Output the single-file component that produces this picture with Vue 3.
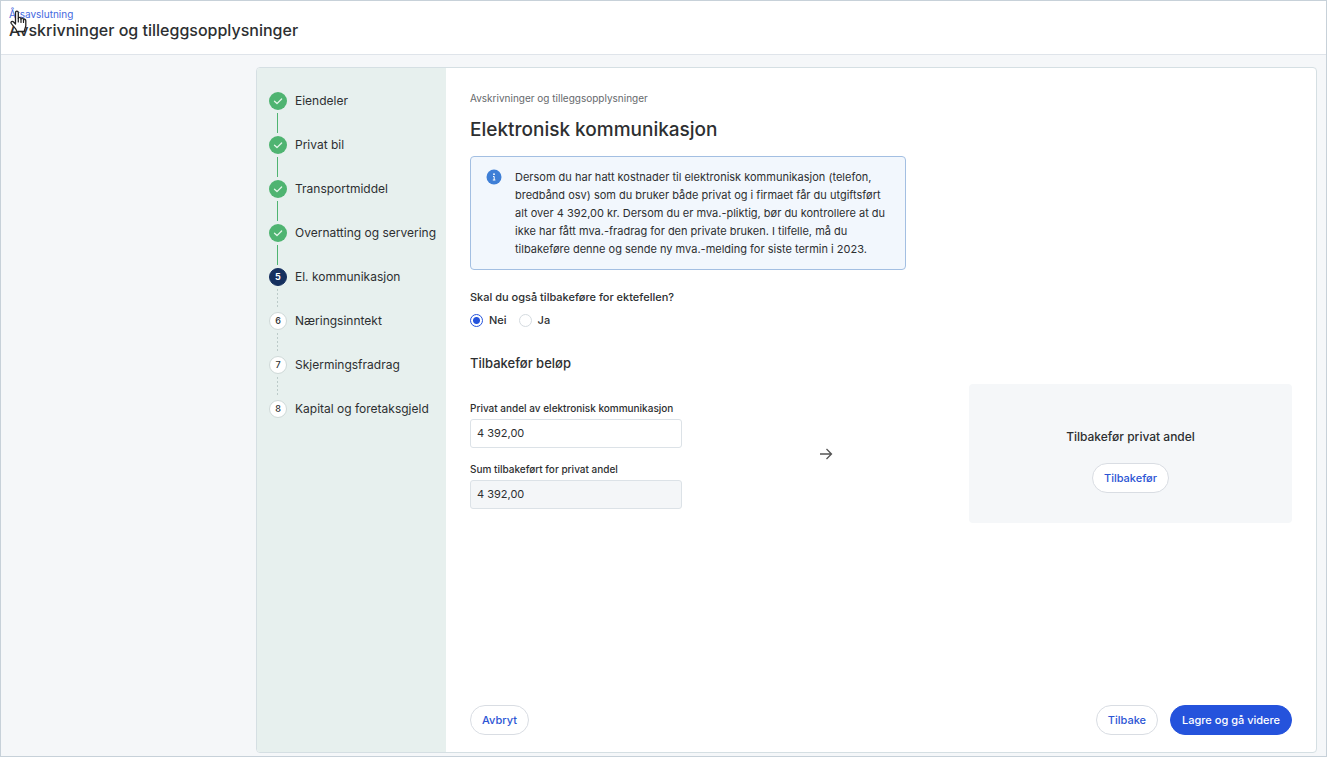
<script setup>
import { ref } from 'vue'

const steps = [
  { label: 'Eiendeler', state: 'done' },
  { label: 'Privat bil', state: 'done' },
  { label: 'Transportmiddel', state: 'done' },
  { label: 'Overnatting og servering', state: 'done' },
  { label: 'El. kommunikasjon', state: 'current' },
  { label: 'Næringsinntekt', state: 'todo' },
  { label: 'Skjermingsfradrag', state: 'todo' },
  { label: 'Kapital og foretaksgjeld', state: 'todo' },
]
const spouse = ref('nei')
const share = ref('4 392,00')
const total = ref('4 392,00')
</script>

<template>
  <div class="page">
    <header class="topbar">
      <a class="crumb-link" href="#">Årsavslutning</a>
      <h1 class="page-title">Avskrivninger og tilleggsopplysninger</h1>
      <svg class="cursor" viewBox="0 0 17 23" aria-hidden="true">
        <path
          d="M5.500 14V2.700C5.500 .6 8.300 .6 8.300 2.700V8.500C8.300 7 11 7 11 9C11 7.600 13.500 7.800 13.500 9.700C13.500 8.500 15.800 8.800 15.800 10.800V15.500C15.800 17.500 14.500 18.500 14.300 21.500H6.800C6.500 18.500 3.500 17 1.300 13.500C.3 11.700 2.300 10.600 3.600 12Z"
          fill="#fff" stroke="#222" stroke-width="1.300" stroke-linejoin="round"
        />
        <path d="M8.300 8.500V12M11 9V12.500M13.500 10V12.500" stroke="#222" stroke-width="1.200" stroke-linecap="round" />
      </svg>
    </header>

    <main class="workspace">
      <section class="card">
        <nav class="sidebar" aria-label="Steg">
          <ol class="steps">
            <li v-for="(step, i) in steps" :key="step.label" class="step" :class="step.state">
              <a href="#" class="step-link">
                <span class="marker">
                  <svg v-if="step.state === 'done'" viewBox="0 0 18 18" aria-hidden="true">
                    <path d="M5.500 9.300L8 11.600L12.600 7" fill="none" stroke="#e4f5ea" stroke-width="1.300" stroke-linecap="round" stroke-linejoin="round" />
                  </svg>
                  <template v-else>{{ i + 1 }}</template>
                </span>
                <span>{{ step.label }}</span>
              </a>
            </li>
          </ol>
        </nav>

        <div class="content">
          <p class="eyebrow">Avskrivninger og tilleggsopplysninger</p>
          <h2 class="heading">Elektronisk kommunikasjon</h2>

          <div class="info">
            <svg class="info-icon" viewBox="0 0 16 16" aria-hidden="true">
              <circle cx="8" cy="8" r="7.500" fill="#3f7fd6" />
              <circle cx="8" cy="5.200" r=".9" fill="#fff" />
              <path d="M7 7.500H8.200V11M6.800 11H9.400" fill="none" stroke="#fff" stroke-width="1" />
            </svg>
            <p>
              Dersom du har hatt kostnader til elektronisk kommunikasjon (telefon, bredbånd osv) som du
              bruker både privat og i firmaet får du utgiftsført alt over 4 392,00 kr. Dersom du er
              mva.-pliktig, bør du kontrollere at du ikke har fått mva.-fradrag for den private bruken. I
              tilfelle, må du tilbakeføre denne og sende ny mva.-melding for siste termin i 2023.
            </p>
          </div>

          <fieldset class="question">
            <legend>Skal du også tilbakeføre for ektefellen?</legend>
            <div class="options">
              <label><input v-model="spouse" type="radio" name="spouse" value="nei" />Nei</label>
              <label><input v-model="spouse" type="radio" name="spouse" value="ja" />Ja</label>
            </div>
          </fieldset>

          <h3 class="subheading">Tilbakefør beløp</h3>

          <div class="transfer">
            <div class="fields">
              <div class="field">
                <label for="share">Privat andel av elektronisk kommunikasjon</label>
                <input id="share" v-model="share" type="text" />
              </div>
              <div class="field">
                <label for="total">Sum tilbakeført for privat andel</label>
                <input id="total" v-model="total" type="text" readonly />
              </div>
            </div>
            <svg class="arrow" viewBox="0 0 14 14" aria-hidden="true">
              <path d="M1 7H12.500M7.500 2L12.500 7L7.500 12" fill="none" stroke="#555" stroke-width="1.300" />
            </svg>
            <div class="panel">
              <p>Tilbakefør privat andel</p>
              <button type="button" class="btn">Tilbakefør</button>
            </div>
          </div>

          <footer class="actions">
            <button type="button" class="btn">Avbryt</button>
            <div class="actions-right">
              <button type="button" class="btn">Tilbake</button>
              <button type="button" class="btn primary">Lagre og gå videre</button>
            </div>
          </footer>
        </div>
      </section>
    </main>
  </div>
</template>

<style>
body {
  margin: 0;
}
</style>

<style scoped>
* {
  box-sizing: border-box;
}
.page {
  display: flex;
  flex-direction: column;
  min-height: 100vh;
  border: 1px solid #c7d1d9;
  background: #f5f7f9;
  color: #2d2f31;
  font-family: Inter, "Liberation Sans", sans-serif;
  font-size: 12px;
  line-height: 18px;
}
h1, h2, h3, p, ol, fieldset {
  margin: 0;
  padding: 0;
}
.topbar {
  position: relative;
  padding: 5px 8px 16px;
  border-bottom: 1px solid #dfe4ea;
  background: #fff;
}
.crumb-link {
  display: block;
  width: fit-content;
  color: #4468e0;
  font-size: 10px;
  line-height: 16px;
  text-decoration: none;
}
.page-title {
  font-size: 16px;
  font-weight: 500;
  line-height: 16px;
}
.cursor {
  position: absolute;
  top: 9px;
  left: 9px;
  width: 17px;
  height: 23px;
}
.workspace {
  display: flex;
  flex: 1;
  padding: 12px 9px 3px 255px;
}
.card {
  display: flex;
  flex: 1;
  overflow: hidden;
  border: 1px solid #d5dfe3;
  border-radius: 4px;
  background: #fff;
}
.sidebar {
  flex: none;
  width: 189px;
  padding: 24px 0 24px 12px;
  background: #e7f0ee;
}
.steps {
  list-style: none;
}
.step {
  height: 44px;
}
.step-link {
  display: flex;
  align-items: center;
  gap: 8px;
  color: #2d2f31;
  line-height: 18px;
  text-decoration: none;
  white-space: nowrap;
}
.marker {
  flex: none;
  width: 18px;
  height: 18px;
  border: 1px solid #cfd9d8;
  border-radius: 50%;
  background: #fff;
  font-size: 9px;
  font-weight: 500;
  line-height: 16px;
  text-align: center;
}
.marker svg {
  display: block;
  width: 18px;
  height: 18px;
}
.done .marker {
  border: 0;
  background: #4fb471;
}
.current .marker {
  border-color: #16305f;
  background: #16305f;
  color: #fff;
  font-weight: 700;
}
.step:not(:last-child)::after {
  content: "";
  display: block;
  width: 1px;
  height: 20px;
  margin: 3px 0 0 8px;
  background: repeating-linear-gradient(#bccbc9 0 2px, transparent 2px 4px);
}
.step.done:not(:last-child)::after {
  background: #4fb471;
}
.content {
  display: flex;
  flex: 1;
  flex-direction: column;
  padding: 21px 24px 17px;
}
.eyebrow {
  color: #66696c;
  font-size: 10px;
}
.heading {
  margin-top: 10px;
  font-size: 19px;
  font-weight: 500;
  line-height: 26px;
}
.info {
  display: flex;
  gap: 13px;
  width: 436px;
  margin-top: 13px;
  padding: 11px 15px;
  border: 1px solid #a3bfe2;
  border-radius: 4px;
  background: #f2f7fd;
  font-size: 11px;
}
.info-icon {
  flex: none;
  width: 16px;
  height: 16px;
  margin-top: 1px;
}
.question {
  min-width: 0;
  margin-top: 18px;
  border: 0;
}
.question legend {
  padding: 0;
  font-size: 11px;
  font-weight: 500;
}
.options {
  display: flex;
  gap: 12px;
  margin-top: 5px;
}
.options label {
  display: flex;
  align-items: center;
  gap: 6px;
  font-size: 11px;
  font-weight: 500;
}
.options input {
  width: 13px;
  height: 13px;
  margin: 0;
  border: 1px solid #d5dbe0;
  border-radius: 50%;
  background: #fff;
  appearance: none;
}
.options input:checked {
  border-color: #2553dc;
  background: radial-gradient(circle, #2553dc 0 3px, #fff 4px);
}
.subheading {
  margin-top: 24px;
  font-size: 13px;
  font-weight: 500;
  line-height: 20px;
}
.transfer {
  display: flex;
  align-items: center;
  margin-top: 11px;
}
.fields {
  display: grid;
  flex: none;
  gap: 12px;
  width: 212px;
}
.field label {
  display: block;
  font-size: 10px;
  font-weight: 500;
  white-space: nowrap;
}
.field input {
  display: block;
  width: 100%;
  height: 29px;
  margin-top: 2px;
  padding: 0 6px;
  border: 1px solid #dce2e7;
  border-radius: 3px;
  background: #fff;
  color: #2d2f31;
  font: inherit;
  font-size: 11px;
}
.field input[readonly] {
  background: #f4f6f8;
}
.arrow {
  flex: none;
  width: 14px;
  height: 14px;
  margin: 0 auto;
}
.panel {
  display: flex;
  flex: 0 0 323px;
  flex-direction: column;
  align-items: center;
  gap: 17px;
  padding: 44px 24px 30px;
  border-radius: 4px;
  background: #f5f7f9;
  font-weight: 500;
}
.btn {
  height: 30px;
  padding: 0 11px;
  border: 1px solid #d9dde3;
  border-radius: 15px;
  background: #fff;
  color: #2c55d4;
  font: inherit;
  font-size: 11px;
  font-weight: 500;
  white-space: nowrap;
}
.btn.primary {
  border-color: #2553dc;
  background: #2553dc;
  color: #fff;
}
.actions {
  display: flex;
  justify-content: space-between;
  margin-top: auto;
  padding-top: 24px;
}
.actions-right {
  display: flex;
  gap: 12px;
}
</style>
